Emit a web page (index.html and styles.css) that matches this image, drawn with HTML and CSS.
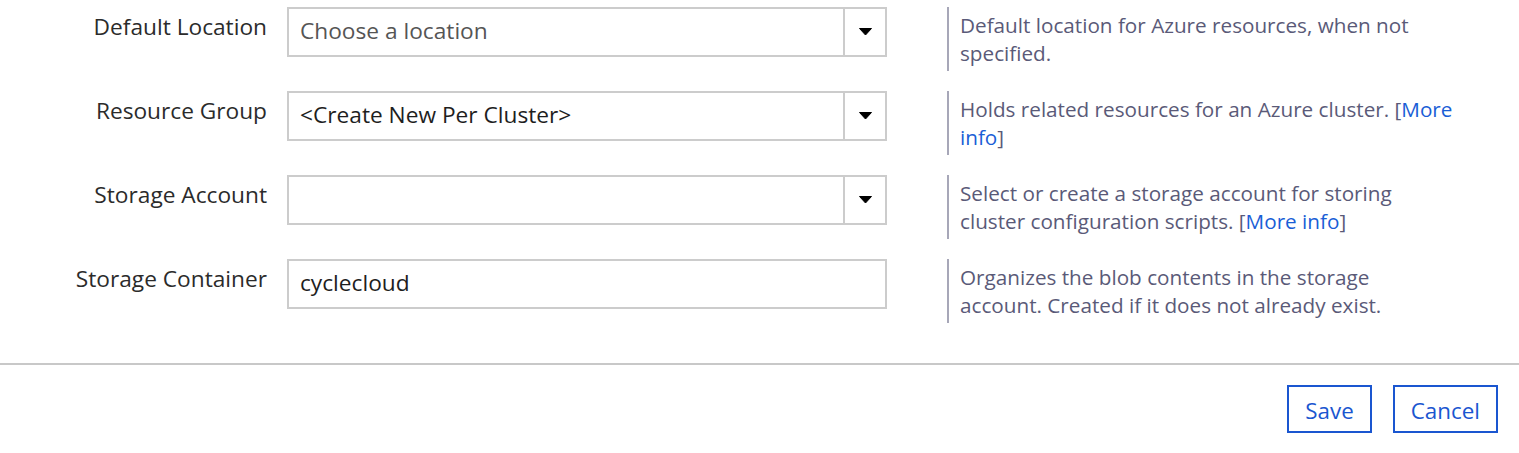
FILE: index.html
```html
<!DOCTYPE html>
<html>
<head>
<meta charset="utf-8">
<link rel="stylesheet" href="styles.css">
</head>
<body>
<div class="form">
  <div class="row">
    <div class="label">Default Location</div>
    <div class="field select">
      <span class="value placeholder">Choose a location</span>
      <span class="arrow"><svg width="13" height="8" viewBox="0 0 13 8"><path d="M0.5 0.5H12.5L6.5 7Z" fill="#000" stroke="#000" stroke-width="1" stroke-linejoin="round"/></svg></span>
    </div>
    <div class="desc">Default location for Azure resources, when not specified.</div>
  </div>
  <div class="row">
    <div class="label">Resource Group</div>
    <div class="field select">
      <span class="value">&lt;Create New Per Cluster&gt;</span>
      <span class="arrow"><svg width="13" height="8" viewBox="0 0 13 8"><path d="M0.5 0.5H12.5L6.5 7Z" fill="#000" stroke="#000" stroke-width="1" stroke-linejoin="round"/></svg></span>
    </div>
    <div class="desc">Holds related resources for an Azure cluster. [<a href="#">More info</a>]</div>
  </div>
  <div class="row">
    <div class="label">Storage Account</div>
    <div class="field select">
      <span class="value"></span>
      <span class="arrow"><svg width="13" height="8" viewBox="0 0 13 8"><path d="M0.5 0.5H12.5L6.5 7Z" fill="#000" stroke="#000" stroke-width="1" stroke-linejoin="round"/></svg></span>
    </div>
    <div class="desc">Select or create a storage account for storing cluster configuration scripts. [<a href="#">More info</a>]</div>
  </div>
  <div class="row">
    <div class="label">Storage Container</div>
    <div class="field">
      <span class="value">cyclecloud</span>
    </div>
    <div class="desc">Organizes the blob contents in the storage account. Created if it does not already exist.</div>
  </div>
</div>
<div class="footer">
  <button class="btn">Save</button>
  <button class="btn">Cancel</button>
</div>
</body>
</html>
```

FILE: styles.css
```css
html, body {
  margin: 0;
  padding: 0;
  background: #fff;
}
body {
  font-family: "Open Sans", "Noto Sans", sans-serif;
  font-size: 22.7px;
  color: #333;
}
.form {
  padding: 7px 0 0 0;
  display: flex;
  flex-direction: column;
  gap: 20px;
}
.row {
  display: grid;
  grid-template-columns: 267px 600px auto;
  column-gap: 20px;
  align-items: start;
}
.label {
  text-align: right;
  padding-top: 5px;
  line-height: 30px;
  color: #2b2b2b;
  white-space: nowrap;
}
.field {
  box-sizing: border-box;
  height: 50px;
  border: 2px solid #cccccc;
  display: flex;
  align-items: center;
  background: #fff;
}
.value {
  flex: 1;
  padding-left: 11px;
  padding-bottom: 3px;
  color: #1e1e1e;
  white-space: nowrap;
}
.value.placeholder {
  color: #555;
}
.arrow {
  width: 40px;
  height: 100%;
  border-left: 2px solid #cccccc;
  display: flex;
  align-items: center;
  justify-content: center;
}
.arrow svg {
  display: block;
}
.desc {
  margin-left: 40px;
  border-left: 2px solid #a7a7b8;
  padding: 4px 0 4px 11px;
  font-size: 20.7px;
  line-height: 28px;
  color: #5a5a78;
  min-height: 64px;
  box-sizing: border-box;
  width: 508px;
}
.desc a {
  color: #1a5ed6;
  text-decoration: none;
}
.footer {
  margin-top: 40px;
  border-top: 2px solid #c8c8c8;
  display: flex;
  justify-content: flex-end;
  gap: 21px;
  padding: 20px 21px 0 0;
}
.btn {
  font-family: inherit;
  font-size: 22.4px;
  color: #1a56d0;
  background: #fff;
  border: 2px solid #1a56d0;
  height: 48px;
  padding: 2px 16px 0;
  cursor: pointer;
}
```
